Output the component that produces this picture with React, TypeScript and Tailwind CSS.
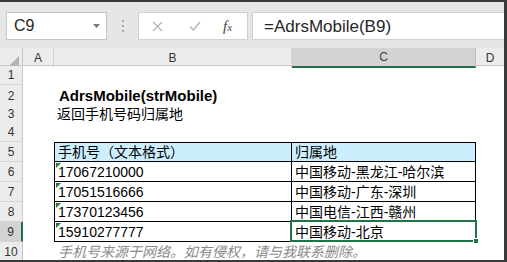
import React from 'react';

const font = "font-['Liberation_Sans','Noto_Sans_CJK_SC',sans-serif]";

const rows = [
  { n: 1, h: 'h-[19px]' },
  { n: 2, h: 'h-[19px]' },
  { n: 3, h: 'h-[19px]' },
  { n: 4, h: 'h-[19px]' },
  { n: 5, h: 'h-[20px]' },
  { n: 6, h: 'h-[20px]' },
  { n: 7, h: 'h-[20px]' },
  { n: 8, h: 'h-[20px]' },
  { n: 9, h: 'h-[20px]' },
];

const data: Record<number, [string, string]> = {
  6: ['17067210000', '中国移动-黑龙江-哈尔滨'],
  7: ['17051516666', '中国移动-广东-深圳'],
  8: ['17370123456', '中国电信-江西-赣州'],
  9: ['15910277777', '中国移动-北京'],
};

function GreenTick() {
  return (
    <span className="absolute top-[1px] left-[1px] w-0 h-0 border-t-[5px] border-t-[#1f7a3a] border-r-[5px] border-r-transparent" />
  );
}

function RowContent({ n }: { n: number }) {
  if (n === 2) {
    return (
      <div className="col-span-3 flex items-center text-[15px] font-bold text-black">
        <span className="ml-[36px]">AdrsMobile(strMobile)</span>
      </div>
    );
  }
  if (n === 3) {
    return (
      <div className="col-span-3 flex items-center text-[14px] text-black">
        <span className="ml-[34px]">返回手机号码归属地</span>
      </div>
    );
  }
  if (n === 5) {
    return (
      <>
        <div />
        <div className="border border-black bg-[#cdeefc] pl-[3px] flex items-center text-[14px] text-black leading-none">
          手机号（文本格式）
        </div>
        <div className="border-y border-r border-black bg-[#cdeefc] pl-[3px] flex items-center text-[14px] text-black leading-none">
          归属地
        </div>
        <div />
      </>
    );
  }
  if (data[n]) {
    const [a, b] = data[n];
    return (
      <>
        <div />
        <div className="relative border-x border-b border-black pl-[3px] flex items-center text-[14px] text-black leading-none">
          <GreenTick />
          {a}
        </div>
        <div className="relative border-r border-b border-black pl-[3px] flex items-center text-[14px] text-black leading-none">
          {b}
          {n === 9 && (
            <>
              <span className="absolute -left-[2px] -top-[2px] -right-[2px] -bottom-[1px] border-2 border-[#217346]" />
              <span className="absolute -right-[4px] -bottom-[3px] w-[6px] h-[6px] bg-[#217346] border border-white" />
            </>
          )}
        </div>
        <div />
      </>
    );
  }
  return <div className="col-span-4" />;
}

export default function App() {
  return (
    <div className={`w-[507px] h-[262px] overflow-hidden bg-white border-t-2 border-r-[3px] border-b-2 border-[#3a3a3a] flex flex-col ${font}`}>
      {/* formula bar */}
      <div className="h-[46px] shrink-0 bg-[#e6e6e6] flex items-start pt-[10px]">
        <div className="ml-[6px] w-[101px] h-[28px] bg-white border border-[#c6c6c6] flex items-center justify-between pl-[7px] pr-[6px]">
          <span className="text-[16px] text-[#262626] leading-none">C9</span>
          <svg width="7" height="4" viewBox="0 0 7 4">
            <path d="M0 0h7L3.5 4z" fill="#777" />
          </svg>
        </div>
        <div className="w-[31px] h-[28px] flex flex-col items-center justify-center gap-[3px]">
          <span className="w-[2px] h-[2px] bg-[#a9a9a9]" />
          <span className="w-[2px] h-[2px] bg-[#a9a9a9]" />
          <span className="w-[2px] h-[2px] bg-[#a9a9a9]" />
        </div>
        <div className="w-[110px] h-[28px] bg-white border border-[#d0d0d0] flex items-center">
          <svg className="ml-[13px]" width="11" height="11" viewBox="0 0 11 11">
            <path d="M1 1l9 9M10 1l-9 9" stroke="#b5b5b5" strokeWidth="1.3" />
          </svg>
          <svg className="ml-[26px]" width="12" height="10" viewBox="0 0 12 10">
            <path d="M1 5.5l3.5 3.5L11 1" stroke="#b5b5b5" strokeWidth="1.4" fill="none" />
          </svg>
          <span className="ml-[22px] font-['Liberation_Serif',serif] italic text-[15px] text-[#444] leading-none">
            f<span className="text-[11px]">x</span>
          </span>
        </div>
        <div className="ml-[4px] flex-1 h-[28px] bg-white border-y border-l border-[#d0d0d0] flex items-center pl-[11px]">
          <span className="text-[17px] text-[#262626] leading-none">=AdrsMobile(B9)</span>
        </div>
      </div>

      {/* column headers */}
      <div className="h-[18px] shrink-0 grid grid-cols-[23px_31px_238px_184px_1fr] bg-[#ececec] text-[12px] text-[#333] border-b border-[#c8c8c8]">
        <div className="relative border-r border-[#c8c8c8]">
          <svg className="absolute right-[3px] bottom-[2px]" width="10" height="10" viewBox="0 0 10 10">
            <path d="M10 0v10H0z" fill="#b4b4b4" />
          </svg>
        </div>
        <div className="border-r border-[#d4d4d4] flex items-center justify-center">A</div>
        <div className="border-r border-[#d4d4d4] flex items-center justify-center">B</div>
        <div className="bg-[#d3d3d3] border-r border-[#c0c0c0] border-b-2 border-b-[#217346] flex items-center justify-center text-[#444]">C</div>
        <div className="flex items-center justify-center">D</div>
      </div>

      {/* rows */}
      {rows.map((r) => (
        <div key={r.n} className={`${r.h} shrink-0 grid grid-cols-[23px_31px_238px_184px_1fr]`}>
          <div
            className={`flex items-center justify-center text-[12px] text-[#333] border-b border-[#d4d4d4] ${
              r.n === 9 ? 'bg-[#d3d3d3] border-r-2 border-r-[#217346]' : 'bg-[#ececec] border-r border-r-[#c8c8c8]'
            }`}
          >
            {r.n}
          </div>
          <RowContent n={r.n} />
        </div>
      ))}
      <div className="h-[18px] shrink-0 grid grid-cols-[23px_1fr] overflow-hidden">
        <div className="bg-[#ececec] border-r border-[#c8c8c8] flex items-start pt-[1px] justify-center text-[12px] text-[#333]">10</div>
        <div className="pl-[35px] italic text-[14px] text-[#8a8a8a] leading-[16px] pt-[2px] whitespace-nowrap">
          手机号来源于网络。如有侵权，请与我联系删除。
        </div>
      </div>
    </div>
  );
}
